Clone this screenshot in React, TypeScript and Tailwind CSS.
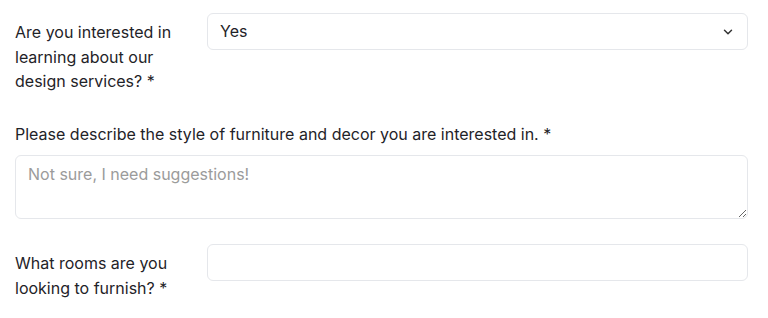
import React from "react";

export default function App() {
  return (
    <div className="w-[768px] h-[318px] bg-white pl-[15px] pr-[20px] pt-[13px] text-[16px] leading-[24.5px] text-[#1f2328]" style={{ fontFamily: "Inter, 'Noto Sans', sans-serif" }}>
      <div className="flex gap-[15px]">
        <label className="w-[177px] pt-[7px]">Are you interested in learning about our design services? *</label>
        <div className="relative flex-1">
          <select defaultValue="yes" className="w-full h-[37px] appearance-none rounded-md border border-[#e5e7eb] bg-white pl-[12px] pr-8 text-[16px] text-[#1f2328] outline-none">
            <option value="yes">Yes</option>
            <option value="no">No</option>
          </select>
          <svg className="pointer-events-none absolute right-[13px] top-[12px]" width="14" height="14" viewBox="0 0 24 24" fill="none" stroke="#333" strokeWidth="2.5" strokeLinecap="round" strokeLinejoin="round">
            <path d="M6 9l6 6 6-6" />
          </svg>
        </div>
      </div>

      <div className="mt-[28px]">
        <label className="block">Please describe the style of furniture and decor you are interested in. *</label>
        <textarea placeholder="Not sure, I need suggestions!" className="mt-[9px] block w-full h-[64px] rounded-md border border-[#e5e7eb] px-[12px] py-[6px] text-[16px] placeholder:text-[#9b9b9b] outline-none" />
      </div>

      <div className="flex gap-[15px] mt-[25px]">
        <label className="w-[177px] pt-[7px]">What rooms are you looking to furnish? *</label>
        <input className="flex-1 h-[37px] rounded-md border border-[#e5e7eb] px-[12px] outline-none" />
      </div>
    </div>
  );
}
